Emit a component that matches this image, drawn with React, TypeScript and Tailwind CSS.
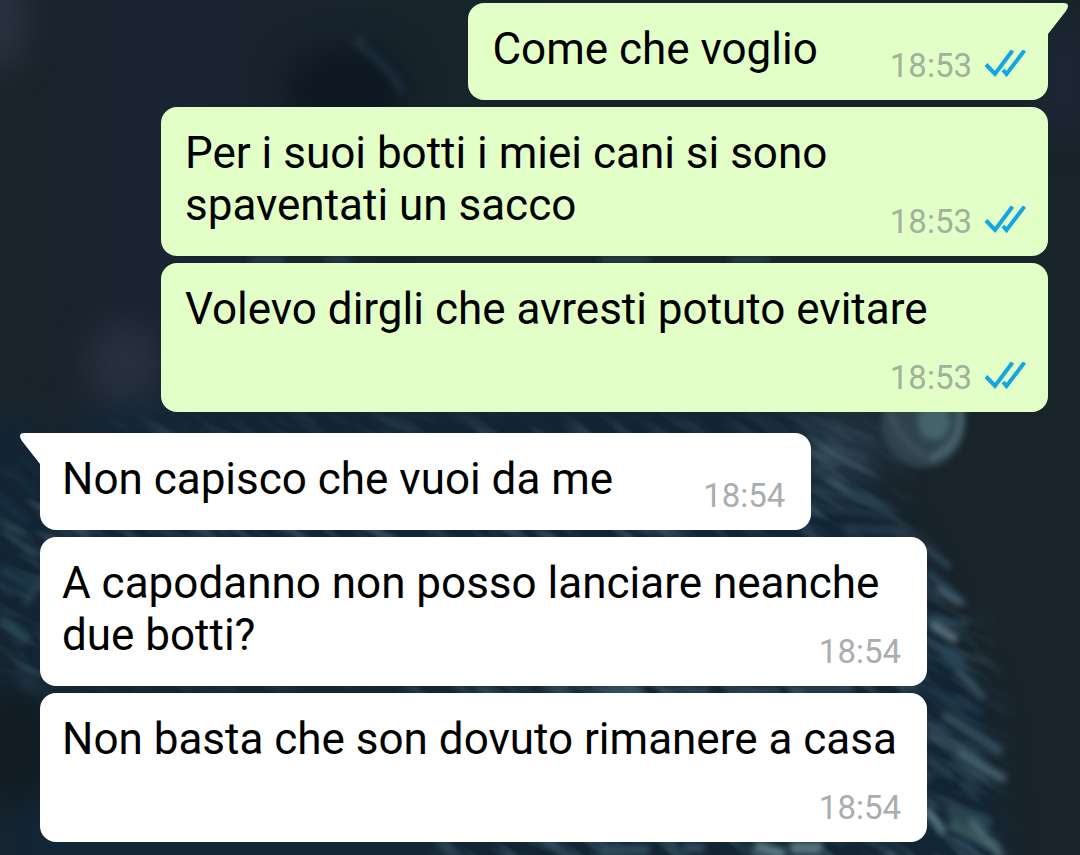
import { clsx } from 'clsx';

type Message = {
	id: number;
	text: string;
	time: string;
	sent: boolean;
	first?: boolean;
};

const messages: Message[] = [
	{ id: 1, text: 'Come che voglio', time: '18:53', sent: true, first: true },
	{ id: 2, text: 'Per i suoi botti i miei cani si sono spaventati un sacco', time: '18:53', sent: true },
	{ id: 3, text: 'Volevo dirgli che avresti potuto evitare', time: '18:53', sent: true },
	{ id: 4, text: 'Non capisco che vuoi da me', time: '18:54', sent: false, first: true },
	{ id: 5, text: 'A capodanno non posso lanciare neanche due botti?', time: '18:54', sent: false },
	{ id: 6, text: 'Non basta che son dovuto rimanere a casa', time: '18:54', sent: false }
];

// Fur strands: start point, end point, width and colour
const strands: [number, number, number, number, number, string][] = [
	[926, 548, 948, 566, 6, '#2f4958'],
	[930, 575, 962, 602, 8, '#2a4454'],
	[940, 590, 958, 602, 7, '#435b68'],
	[930, 620, 966, 624, 6, '#294555'],
	[934, 626, 954, 638, 9, '#587079'],
	[928, 640, 960, 662, 6, '#294354'],
	[944, 656, 974, 684, 6, '#294555'],
	[958, 672, 982, 696, 6, '#3b5560'],
	[928, 690, 980, 712, 7, '#1c3546'],
	[946, 716, 998, 750, 9, '#344e5c'],
	[930, 736, 974, 758, 8, '#324b58'],
	[960, 754, 1002, 778, 9, '#435d69'],
	[930, 760, 952, 776, 6, '#2b4552'],
	[928, 812, 942, 830, 8, '#55757e'],
	[954, 812, 984, 822, 16, '#29434f'],
	[954, 826, 994, 846, 12, '#355459'],
	[972, 822, 1000, 855, 7, '#4c6871'],
	[815, 470, 838, 462, 6, '#2d4552'],
	[818, 490, 870, 500, 6, '#263b48'],
	[830, 508, 890, 516, 5, '#263b48'],
	[850, 528, 906, 532, 8, '#24394a'],
	[4, 570, 34, 590, 8, '#1c3a4c'],
	[6, 622, 26, 638, 10, '#27444f'],
	[26, 602, 36, 588, 6, '#2b4250'],
	[0, 500, 26, 520, 8, '#173040'],
	[12, 470, 36, 496, 6, '#162d3c']
];

const Wallpaper = () => (
	<svg
		className="absolute inset-0 -z-10 h-full w-full"
		viewBox="0 0 1080 855"
		preserveAspectRatio="xMidYMid slice"
		aria-hidden="true"
	>
		<defs>
			<filter
				id="soft"
				filterUnits="userSpaceOnUse"
				x="-60"
				y="-60"
				width="1200"
				height="975"
				colorInterpolationFilters="sRGB"
			>
				<feGaussianBlur stdDeviation="16" />
			</filter>
			<filter
				id="hair"
				filterUnits="userSpaceOnUse"
				x="0"
				y="0"
				width="1080"
				height="855"
				colorInterpolationFilters="sRGB"
			>
				<feGaussianBlur stdDeviation="3" />
			</filter>
			<filter id="grain" x="0" y="0" width="100%" height="100%" colorInterpolationFilters="sRGB">
				<feTurbulence type="fractalNoise" baseFrequency="0.018 0.07" numOctaves="2" seed="8" />
				<feColorMatrix values="0 0 0 0 0.36  0 0 0 0 0.5  0 0 0 0 0.56  2.8 0 0 0 -1.2" />
			</filter>
			<mask id="coat">
				<path
					d="M130 425H880L905 540L975 620L990 700L1000 900H440L420 680H0V480H60Z"
					fill="white"
					filter="url(#soft)"
				/>
			</mask>
			<linearGradient id="night" x1="0" y1="0" x2="1" y2="0">
				<stop offset="0" stopColor="#1a242b" />
				<stop offset="0.15" stopColor="#1a2331" />
				<stop offset="0.35" stopColor="#18242c" />
				<stop offset="1" stopColor="#19232a" />
			</linearGradient>
		</defs>
		<rect width="1080" height="855" fill="url(#night)" />
		<g filter="url(#soft)">
			<ellipse cx="0" cy="20" rx="26" ry="50" fill="#2a3240" />
			<ellipse cx="125" cy="365" rx="38" ry="46" fill="#282f3d" />
			<ellipse cx="345" cy="90" rx="62" ry="46" fill="#0f1822" />
			<path d="M130 400H830L905 540L985 700L1005 900H0V620L20 560L60 430Z" fill="#122534" />
			<ellipse cx="10" cy="520" rx="45" ry="110" fill="#122534" />
			<ellipse cx="15" cy="745" rx="40" ry="60" fill="#111b22" />
			<ellipse cx="840" cy="450" rx="50" ry="40" fill="#223441" />
			<ellipse cx="1065" cy="80" rx="20" ry="60" fill="#1e2738" />
		</g>
		<g mask="url(#coat)" opacity="0.4">
			<rect x="-200" y="-300" width="1500" height="1400" filter="url(#grain)" transform="rotate(32 540 640)" />
		</g>
		<g filter="url(#hair)">
			<path d="M354 40Q385 62 404 92" fill="none" stroke="#1a2a3a" strokeWidth="9" />
			<circle cx="360" cy="42" r="6" fill="#222d36" />
			<ellipse cx="923" cy="424" rx="42" ry="44" fill="#2f434e" />
			<ellipse cx="934" cy="422" rx="16" ry="18" fill="#446469" />
			<path d="M960 405Q966 445 930 459" fill="none" stroke="#48626b" strokeWidth="8" />
			<path d="M890 412Q900 442 925 456" fill="none" stroke="#3d505c" strokeWidth="6" />
			{strands.map(([x1, y1, x2, y2, width, color]) => (
				<line
					key={`${x1}-${y1}`}
					x1={x1}
					y1={y1}
					x2={x2}
					y2={y2}
					stroke={color}
					strokeWidth={width}
					strokeLinecap="round"
				/>
			))}
			<path d="M250 260H285M325 260H350M600 260H650M730 260H770" stroke="#2f4751" strokeWidth="5" />
			<path d="M590 690H640M660 690H710M740 690H780M795 689H850" stroke="#3b5968" strokeWidth="4" />
			<path d="M755 846L785 855M790 848H822" stroke="#55757e" strokeWidth="12" />
			<path d="M600 850H650M682 848H705" stroke="#304d5c" strokeWidth="9" />
		</g>
	</svg>
);

const ReadTicks = () => (
	<svg className="mb-1 h-7 w-[42px]" viewBox="0 0 42 28" fill="none" role="img" aria-label="Letto">
		<path
			d="M2 14.500L11 24L28.500 0.500M19 20L22.500 24L40.500 0.500"
			stroke="#14a5e3"
			strokeWidth="4"
		/>
	</svg>
);

const Tail = ({ sent }: { sent: boolean }) => (
	<svg
		className={clsx(
			'absolute top-0 h-8 w-[21px]',
			sent ? 'left-full -ml-px fill-[#e1ffc7]' : 'right-full -mr-px -scale-x-100 fill-white'
		)}
		viewBox="0 0 21 32"
		aria-hidden="true"
	>
		<path d="M0 0H17Q21 0 21 3Q21 5 19 8L1 31V32H0Z" />
	</svg>
);

const Bubble = ({ text, time, sent, first }: Message) => (
	<li
		className={clsx(
			'relative flow-root max-w-[88%] rounded-2xl pt-5 pb-3.5',
			sent ? 'self-end bg-[#e1ffc7] pr-[22px] pl-6' : 'self-start bg-white pr-[26px] pl-[22px]',
			first && (sent ? 'rounded-tr-none' : 'mt-3.5 rounded-tl-none')
		)}
	>
		{first && <Tail sent={sent} />}
		<p className="text-[44px] leading-[52px] text-black">
			{text}
			<span
				className={clsx(
					'float-right flex items-center gap-3 pt-[23px] text-[33px] leading-10',
					sent ? 'ml-[72px] text-[#a4b09c]' : 'ml-[90px] text-[#a9adb0]'
				)}
			>
				<time>{time}</time>
				{sent && <ReadTicks />}
			</span>
		</p>
	</li>
);

const App = () => {
	return (
		<main className="relative isolate min-h-screen overflow-hidden bg-[#1a242d] font-['Roboto',sans-serif]">
			<Wallpaper />
			<ul className="flex flex-col gap-[7px] pt-[3px] pr-8 pb-3 pl-10">
				{messages.map((message) => (
					<Bubble key={message.id} {...message} />
				))}
			</ul>
		</main>
	);
};

export default App;
